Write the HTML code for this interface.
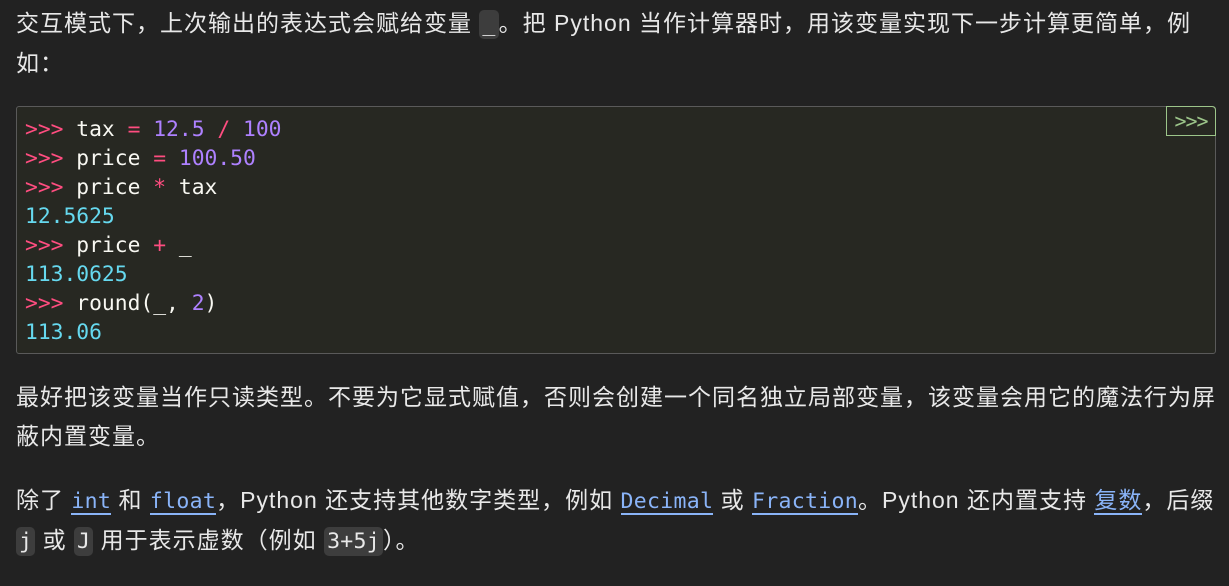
<!DOCTYPE html>
<html><head><meta charset="utf-8"><style>
html,body{margin:0;padding:0;background:#222222;width:1229px;height:586px;overflow:hidden}
body{font-family:"Liberation Sans","Noto Sans CJK SC",sans-serif;color:#e8e8e8;font-size:23px;letter-spacing:1px}
p{position:absolute;left:16px;margin:0;line-height:39px;white-space:nowrap}
code{font-family:"DejaVu Sans Mono",monospace;letter-spacing:0.3px;font-size:21.5px}
code{background:#3d3d3d;border-radius:5px;padding:2px 3px}
a{color:#8ab4f8;text-decoration:none;border-bottom:2px solid #8ab4f8}
a code{background:none;padding:0}
.pre{position:absolute;left:16px;top:106px;width:1198px;height:246px;background:#272822;border:1px solid #5a5a5a;border-radius:3px}
.lines{position:absolute;left:8px;top:8px;line-height:29px;white-space:pre;color:#f8f8f2;font-family:"DejaVu Sans Mono",monospace;font-size:21.3px;letter-spacing:0}
.p{color:#ff4d80}.n{color:#ae81ff}.o{color:#66d9ef}.op{color:#ff4d80}
.btn{position:absolute;right:-1px;top:-1px;width:48px;height:28px;border:1px solid #9cc58a;color:#9cc58a;font-family:"DejaVu Sans Mono",monospace;font-size:20px;line-height:28px;text-align:center;letter-spacing:-1px;border-radius:0 4px 0 0}
</style></head><body>
<p style="top:4px">交互模式下，上次输出的表达式会赋给变量 <code>_</code>。把 Python 当作计算器时，用该变量实现下一步计算更简单，例<br>如：</p>
<div class="pre"><div class="lines"><span class="p">&gt;&gt;&gt;</span> tax <span class="op">=</span> <span class="n">12.5</span> <span class="op">/</span> <span class="n">100</span>
<span class="p">&gt;&gt;&gt;</span> price <span class="op">=</span> <span class="n">100.50</span>
<span class="p">&gt;&gt;&gt;</span> price <span class="op">*</span> tax
<span class="o">12.5625</span>
<span class="p">&gt;&gt;&gt;</span> price <span class="op">+</span> _
<span class="o">113.0625</span>
<span class="p">&gt;&gt;&gt;</span> round(_, <span class="n">2</span>)
<span class="o">113.06</span></div><div class="btn">&gt;&gt;&gt;</div></div>
<p style="top:378px">最好把该变量当作只读类型。不要为它显式赋值，否则会创建一个同名独立局部变量，该变量会用它的魔法行为屏<br>蔽内置变量。</p>
<p style="top:481px">除了 <a><code>int</code></a> 和 <a><code>float</code></a>，Python 还支持其他数字类型，例如 <a><code>Decimal</code></a> 或 <a><code>Fraction</code></a>。Python 还内置支持 <a>复数</a>，后缀<br><code>j</code> 或 <code>J</code> 用于表示虚数（例如 <code>3+5j</code>）。</p>
</body></html>
